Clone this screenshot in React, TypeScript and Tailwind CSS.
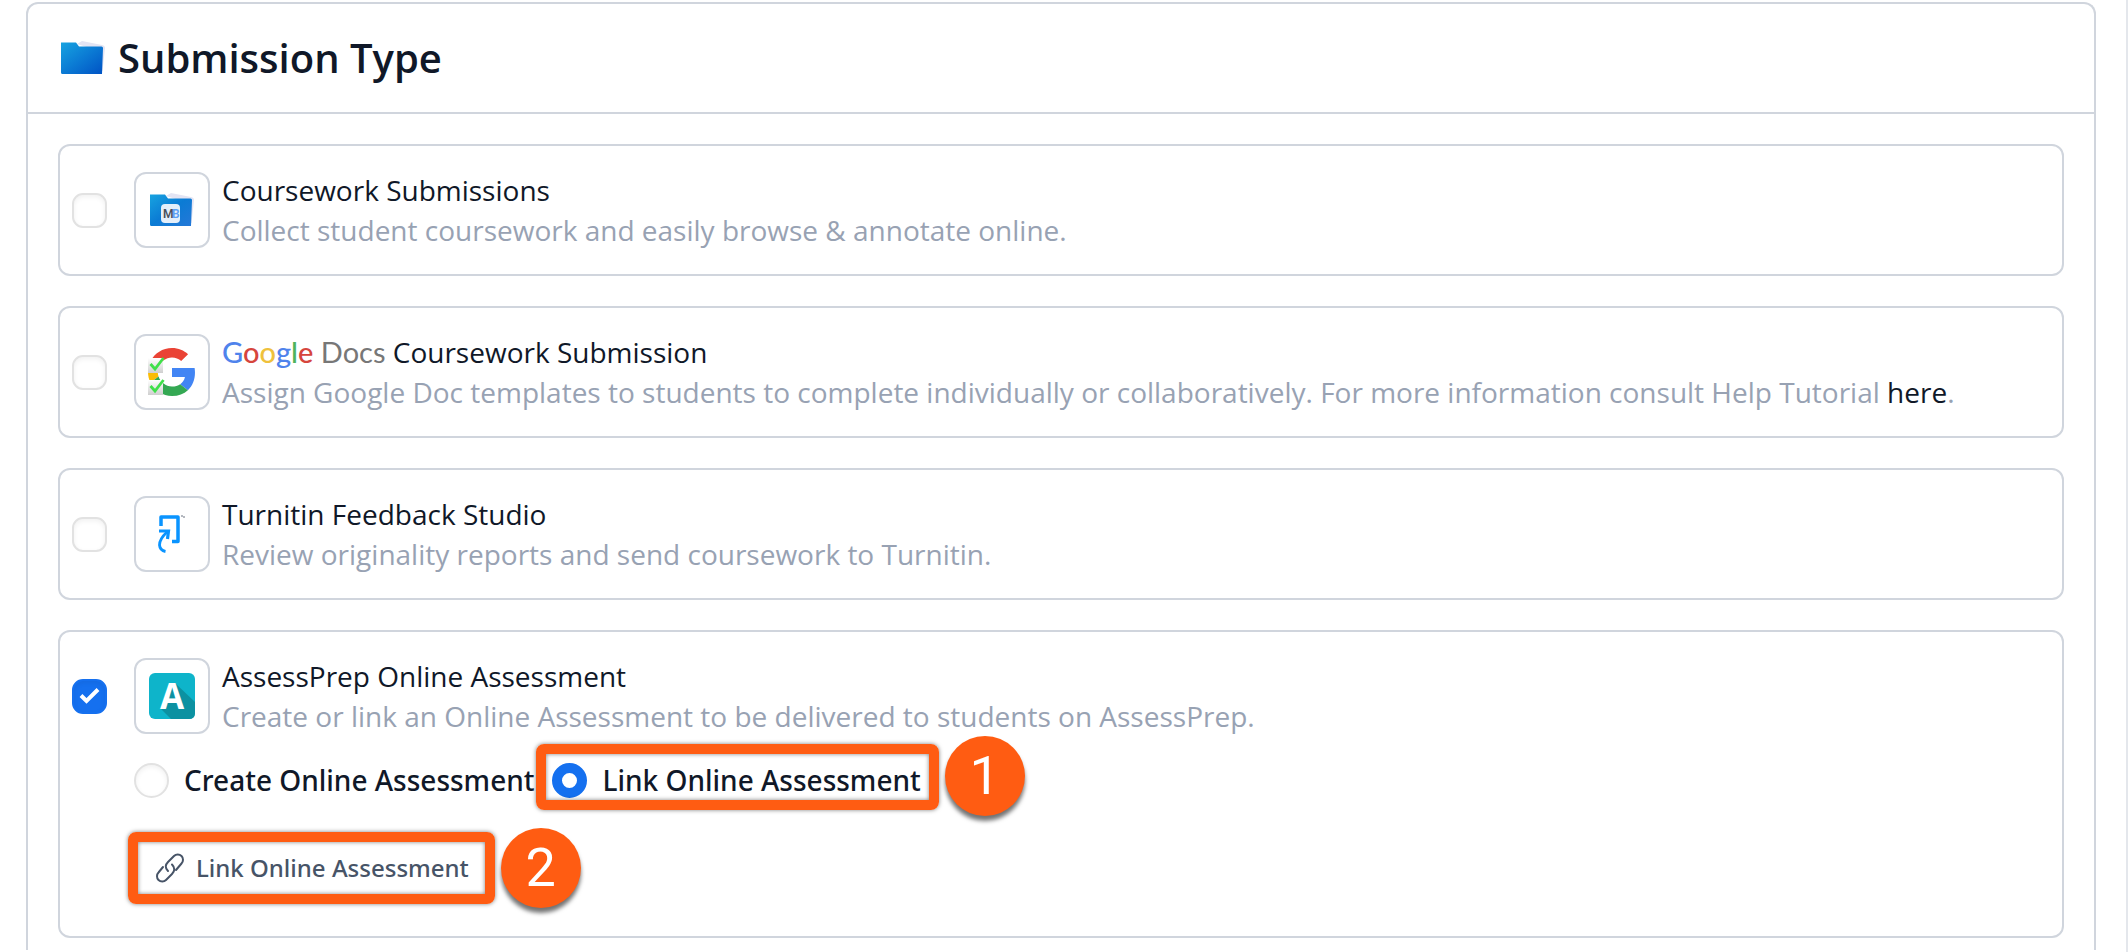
import React, { useState } from "react";

function FolderIcon({ badge = false }: { badge?: boolean }) {
  const id = badge ? "folder-badge" : "folder-plain";
  return (
    <svg width="46" height="36" viewBox="0 0 46 36" aria-hidden="true">
      <defs>
        <linearGradient id={id} x1="0" y1="0" x2="1" y2="1">
          <stop offset="0" stopColor="#17a3e0" />
          <stop offset="0.5" stopColor="#0b7bd4" />
          <stop offset="1" stopColor={badge ? "#2578d8" : "#0052c4"} />
        </linearGradient>
      </defs>
      <path d="M17 4 L22 1 L42 5 Q45 5.500 45 8 L42.500 31 H36 V10 Z" fill="#e3e4f3" />
      <path d="M1 2.500 H16 L19 6.500 H41.500 Q43 6.500 43 8 L42 34 H2.500 Q1 34 1 32.500 Z" fill={`url(#${id})`} />
      {badge && (
        <>
          <rect x="12" y="12" width="19" height="19" rx="4" fill="#e4effa" />
          <text x="23" y="26" fontSize="12" fontWeight="600" fontFamily="Roboto, sans-serif" fill="#5ba0f5">B</text>
          <text x="14" y="26" fontSize="12" fontWeight="600" fontFamily="Roboto, sans-serif" fill="#4a4f5a">M</text>
        </>
      )}
    </svg>
  );
}

function GoogleIcon() {
  return (
    <svg width="48" height="48" viewBox="0 0 48 48" aria-hidden="true">
      <defs>
        <linearGradient id="sheet" x1="0" y1="0" x2="0" y2="1">
          <stop offset="0" stopColor="#ffffff" />
          <stop offset="1" stopColor="#cfcfcf" />
        </linearGradient>
      </defs>
      <path fill="#EA4335" d="M24 9.500c3.540 0 6.710 1.220 9.210 3.600l6.850-6.850C35.900 2.380 30.470 0 24 0 14.620 0 6.510 5.380 2.560 13.220l7.980 6.190C12.430 13.720 17.740 9.500 24 9.500z" />
      <path fill="#4285F4" d="M46.980 24.550c0-1.570-.15-3.090-.38-4.550H24v9.020h12.940c-.58 2.960-2.260 5.480-4.780 7.180l7.730 6c4.510-4.180 7.090-10.360 7.090-17.650z" />
      <path fill="#FBBC05" d="M10.530 28.590c-.48-1.450-.76-2.990-.76-4.590s.27-3.140.76-4.590l-7.980-6.190C.92 16.460 0 20.120 0 24c0 3.880.92 7.540 2.560 10.780l7.970-6.190z" />
      <path fill="#34A853" d="M24 48c6.480 0 11.930-2.130 15.890-5.810l-7.730-6c-2.150 1.450-4.920 2.300-8.160 2.300-6.260 0-11.570-4.220-13.470-9.910l-7.980 6.190C6.510 42.620 14.620 48 24 48z" />
      {[10, 32].map((y) => (
        <g key={y} transform={`translate(0 ${y})`}>
          <rect x="0" y="0" width="15" height="15" fill="url(#sheet)" />
          <path d="M2.500 6 L7 11 L15.500 0" fill="none" stroke="#3fe04a" strokeWidth="2.800" />
        </g>
      ))}
    </svg>
  );
}

function TurnitinIcon() {
  return (
    <svg width="30" height="40" viewBox="0 0 30 40" fill="none" stroke="#0a94ff" aria-hidden="true">
      <path d="M4 12 V3 H21 V27.500 H15" strokeWidth="3.500" strokeLinejoin="round" />
      <path d="M2 17 H11.500 L10.500 25" strokeWidth="3.200" />
      <path d="M10 18 Q2.500 25 2.500 31 Q3 36.500 8.500 37.500" strokeWidth="2.800" />
      <path d="M24 2 H26 M26 3 H28" stroke="#6b7280" />
    </svg>
  );
}

function AssessPrepIcon() {
  return (
    <svg width="46" height="46" viewBox="0 0 46 46" aria-hidden="true">
      <rect width="46" height="46" rx="6" fill="#0eb4ca" />
      <path d="M26 10 L46 29 V40 Q46 46 40 46 H22 L12 36 Z" fill="#0c91a1" />
      <text x="23" y="36" textAnchor="middle" fontSize="35" fontWeight="700" fontFamily="'Open Sans', sans-serif" fill="#fff">A</text>
    </svg>
  );
}

function LinkIcon() {
  return (
    <svg width="28" height="30" viewBox="0 0 28 30" fill="none" stroke="#475467" strokeWidth="2" strokeLinecap="round" aria-hidden="true">
      <path d="M12 18 C9 15 9 12 12 9 L18 3 C20 1 23.500 1 25.500 3 C27.500 5 27.500 8.500 25.500 10.500 L20 17" />
      <path d="M16 11.500 C19 14.500 19 18 16 21 L10 27 C8 29 4.500 29 2.500 27 C0.500 25 0.500 21.500 2.500 19.500 L7 14" />
    </svg>
  );
}

function GoogleDocsWordmark() {
  return (
    <span className="font-['Lato',sans-serif] text-[29px]">
      <span className="font-medium">
        <span className="text-[#4f83ec]">G</span>
        <span className="text-[#d6453d]">o</span>
        <span className="text-[#efc13c]">o</span>
        <span className="text-[#4f83ec]">g</span>
        <span className="text-[#4fb35b]">l</span>
        <span className="text-[#d6453d]">e</span>
      </span>{" "}
      <span className="text-[#777777]">Docs</span>
    </span>
  );
}

function StepBadge({ step, className }: { step: number; className: string }) {
  return (
    <span
      className={`absolute flex size-20 items-center justify-center rounded-full bg-[#ff5c12] font-['Roboto',sans-serif] text-[54px] font-normal text-white shadow-[0_5px_4px_rgba(0,0,0,0.55)] ${className}`}
    >
      {step}
    </span>
  );
}

const outline =
  "pointer-events-none absolute rounded-lg border-10 border-[#ff5c12] shadow-[0_0_4px_rgba(0,0,0,0.5),inset_0_0_4px_rgba(0,0,0,0.5)]";

const radio =
  "size-[35px] appearance-none rounded-full border-2 border-[#e2e2e2] shadow-[inset_0_2px_5px_rgba(0,0,0,0.06)] checked:border-10 checked:border-[#1570ef] checked:shadow-none";

const options = [
  {
    id: "coursework",
    icon: <FolderIcon badge />,
    title: "Coursework Submissions",
    text: "Collect student coursework and easily browse & annotate online.",
  },
  {
    id: "google",
    icon: <GoogleIcon />,
    title: (
      <>
        <GoogleDocsWordmark /> Coursework Submission
      </>
    ),
    text: (
      <>
        Assign Google Doc templates to students to complete individually or collaboratively. For more information consult Help Tutorial{" "}
        <a href="#help" className="text-[#101828]">here</a>.
      </>
    ),
  },
  {
    id: "turnitin",
    icon: <TurnitinIcon />,
    title: "Turnitin Feedback Studio",
    text: "Review originality reports and send coursework to Turnitin.",
  },
  {
    id: "assessprep",
    icon: <AssessPrepIcon />,
    title: "AssessPrep Online Assessment",
    text: "Create or link an Online Assessment to be delivered to students on AssessPrep.",
  },
];

export default function App() {
  const [selected, setSelected] = useState("assessprep");
  const [mode, setMode] = useState("link");

  return (
    <div className="min-h-screen border-r-2 border-[#e4e7ec] bg-white pt-0.5 pr-[30px] pl-[26px] font-['Open_Sans',sans-serif] text-[28px] leading-10 text-[#101828]">
      <section className="rounded-t-xl border-2 border-b-0 border-[#d0d5dd]">
        <header className="flex items-center gap-3 border-b-2 border-[#d0d5dd] px-8 py-[27px]">
          <FolderIcon />
          <h2 className="text-[40px] leading-[54px] font-semibold">Submission Type</h2>
        </header>

        <div className="flex flex-col gap-[30px] px-[30px] pt-[30px] pb-3">
          {options.map((option) => (
            <div key={option.id} className="rounded-xl border-2 border-[#d0d5dd] py-6 pr-6 pl-3">
              <div className="flex items-center">
                <div className="relative flex size-[35px] shrink-0">
                  <input
                    id={option.id}
                    type="checkbox"
                    checked={selected === option.id}
                    onChange={() => setSelected(option.id)}
                    className="size-full appearance-none rounded-[11px] border-2 border-[#e2e2e2] shadow-[inset_0_2px_5px_rgba(0,0,0,0.06)] checked:border-[#1570ef] checked:bg-[#1570ef]"
                  />
                  {selected === option.id && (
                    <svg viewBox="0 0 35 35" className="pointer-events-none absolute inset-0" aria-hidden="true">
                      <path d="M9 16.500 L14.500 22 L26 10.500" fill="none" stroke="#fff" strokeWidth="4" />
                    </svg>
                  )}
                </div>
                <div className="ml-[27px] flex size-[76px] shrink-0 items-center justify-center rounded-xl border-2 border-[#d0d5dd]">
                  {option.icon}
                </div>
                <div className="ml-3 min-w-0">
                  <label htmlFor={option.id} className="block">{option.title}</label>
                  <p className="text-[#98a2b3]">{option.text}</p>
                </div>
              </div>

              {option.id === "assessprep" && (
                <div className="pl-[62px] font-['Noto_Sans',sans-serif] font-medium">
                  <div className="flex items-center pt-6">
                    <label className="flex items-center gap-[15px]">
                      <input
                        type="radio"
                        name="mode"
                        checked={mode === "create"}
                        onChange={() => setMode("create")}
                        className={radio}
                      />
                      Create Online Assessment
                    </label>
                    <div className="relative ml-[18px]">
                      <label className="flex items-center gap-[15px]">
                        <input
                          type="radio"
                          name="mode"
                          checked={mode === "link"}
                          onChange={() => setMode("link")}
                          className={radio}
                        />
                        Link Online Assessment
                      </label>
                      <span className={`${outline} -top-4 -right-[18px] -bottom-2.5 -left-4`} />
                      <StepBadge step={1} className="-top-6 left-full ml-6" />
                    </div>
                  </div>
                  <div className="flex pt-10 pb-4">
                    <div className="relative">
                      <button type="button" className="flex h-14 items-center gap-3 pr-5 pl-[22px] text-2xl text-[#475467]">
                        <LinkIcon />
                        Link Online Assessment
                      </button>
                      <span className={`${outline} -inset-x-1.5 -inset-y-2`} />
                      <StepBadge step={2} className="-top-3 left-full ml-3" />
                    </div>
                  </div>
                </div>
              )}
            </div>
          ))}
        </div>
      </section>
    </div>
  );
}
